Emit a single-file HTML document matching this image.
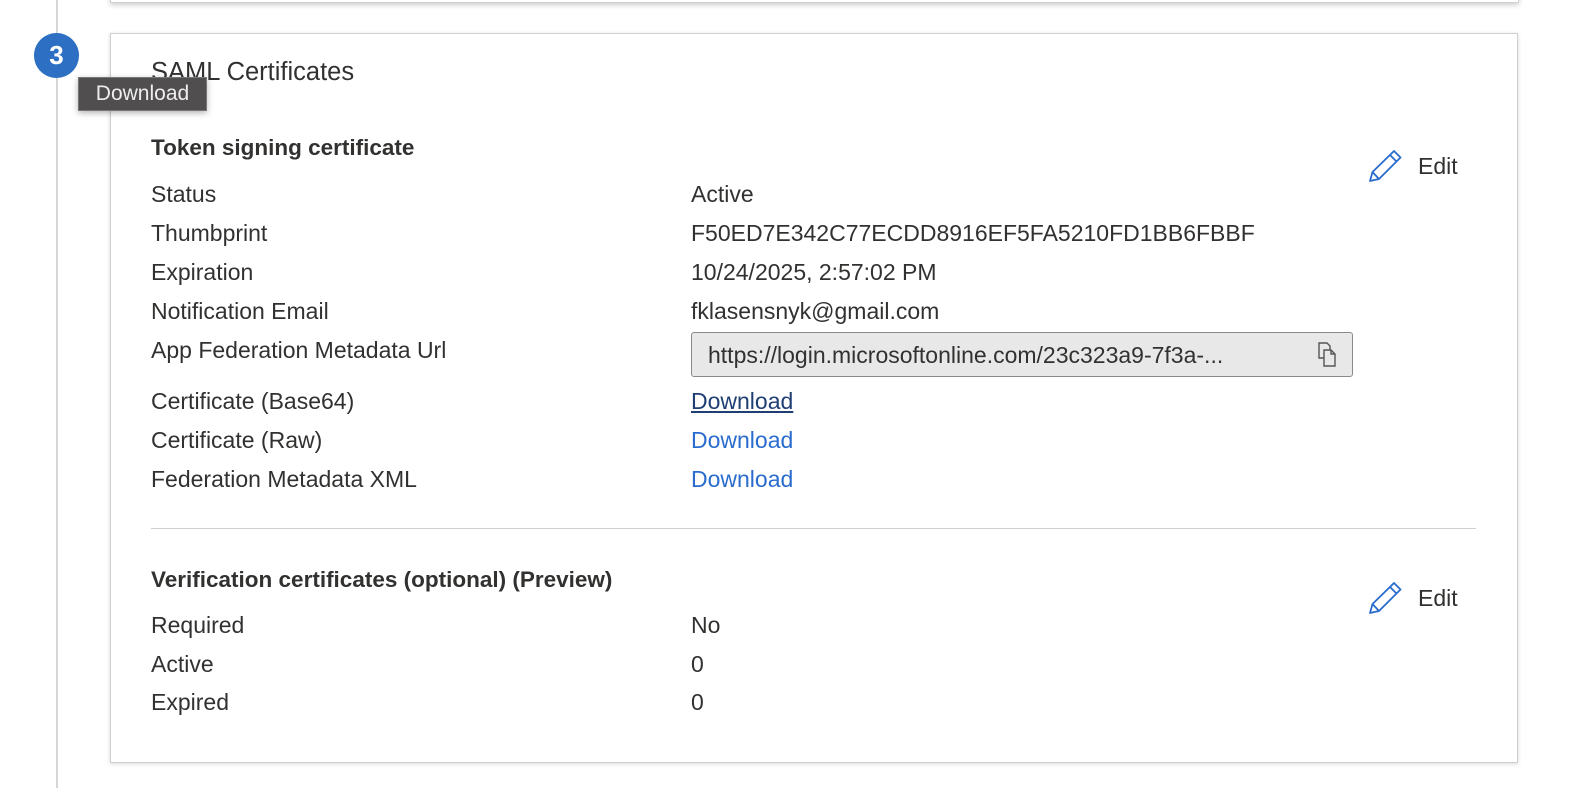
<!DOCTYPE html>
<html><head><style>
body{margin:0;width:1576px;height:788px;background:#fff;position:relative;overflow:hidden;font-family:"Liberation Sans",sans-serif;color:#323130;}
.a{position:absolute;white-space:nowrap;font-size:23px;line-height:28px;}
.l{left:151px}.v{left:691px}
.lnk{color:#2a6ccd}
</style></head><body>
<div style="position:absolute;left:56px;top:0;width:2px;height:788px;background:#d6d6d6"></div>
<div style="position:absolute;left:110px;top:-20px;width:1407px;height:21px;border:1px solid #d0d0d0;box-shadow:0 2px 5px rgba(0,0,0,.2)"></div>
<div style="position:absolute;left:110px;top:33px;width:1406px;height:728px;border:1px solid #cfcfcf;box-shadow:0 1px 4px rgba(0,0,0,.15)"></div>
<div style="position:absolute;left:34px;top:33px;width:45px;height:45px;border-radius:50%;background:#2d6fc2;color:#fff;font-weight:bold;font-size:26px;line-height:45px;text-align:center">3</div>
<div class="a" style="left:151px;top:58px;font-size:25.5px">SAML Certificates</div>
<div style="position:absolute;left:78px;top:77px;width:127px;height:32px;background:#504e4e;border:1px solid #777;color:#eee;font-size:21px;line-height:31px;text-align:center;box-shadow:0 2px 6px rgba(0,0,0,.3)">Download</div>
<div class="a l" style="top:134px;font-weight:bold;font-size:22.5px">Token signing certificate</div>
<div class="a l" style="top:180px">Status</div><div class="a v" style="top:180px">Active</div>
<div class="a l" style="top:219px">Thumbprint</div><div class="a v" style="top:219px">F50ED7E342C77ECDD8916EF5FA5210FD1BB6FBBF</div>
<div class="a l" style="top:258px">Expiration</div><div class="a v" style="top:258px">10/24/2025, 2:57:02 PM</div>
<div class="a l" style="top:297px">Notification Email</div><div class="a v" style="top:297px">fklasensnyk@gmail.com</div>
<div class="a l" style="top:336px">App Federation Metadata Url</div>
<div style="position:absolute;left:691px;top:332px;width:660px;height:43px;background:#e8e8e8;border:1px solid #8a8a8a;border-radius:3px"></div>
<div class="a" style="left:708px;top:341px">https://login.microsoftonline.com/23c323a9-7f3a-...</div>
<svg style="position:absolute;left:1318px;top:342px" width="22" height="26" viewBox="0 0 22 26" fill="none" stroke="#555" stroke-width="1.4"><path d="M1 1h8l3 3v12H1z"/><path d="M6 8h7l4 4v12H6z" fill="#e8e8e8"/><path d="M13 8v4h4"/></svg>
<div class="a l" style="top:387px">Certificate (Base64)</div><div class="a v" style="top:387px;color:#1f3f74;text-decoration:underline">Download</div>
<div class="a l" style="top:426px">Certificate (Raw)</div><div class="a v lnk" style="top:426px">Download</div>
<div class="a l" style="top:465px">Federation Metadata XML</div><div class="a v lnk" style="top:465px">Download</div>
<div style="position:absolute;left:151px;top:528px;width:1325px;height:1px;background:#d0d0d0"></div>
<div class="a l" style="top:566px;font-weight:bold;font-size:22.5px">Verification certificates (optional) (Preview)</div>
<div class="a l" style="top:611px">Required</div><div class="a v" style="top:611px">No</div>
<div class="a l" style="top:650px">Active</div><div class="a v" style="top:650px">0</div>
<div class="a l" style="top:688px">Expired</div><div class="a v" style="top:688px">0</div>
<svg style="position:absolute;left:1368px;top:149px" width="36" height="34" viewBox="0 0 36 34" fill="none" stroke="#2a6ccd" stroke-width="1.8" stroke-linejoin="round"><path d="M2 32l2.5-9L26 2l6.5 6.5L11 30z M22 6l6.5 6.5 M4.5 23l6.5 7"/></svg>
<div class="a" style="left:1418px;top:152px">Edit</div>
<svg style="position:absolute;left:1368px;top:581px" width="36" height="34" viewBox="0 0 36 34" fill="none" stroke="#2a6ccd" stroke-width="1.8" stroke-linejoin="round"><path d="M2 32l2.5-9L26 2l6.5 6.5L11 30z M22 6l6.5 6.5 M4.5 23l6.5 7"/></svg>
<div class="a" style="left:1418px;top:584px">Edit</div>
</body></html>
